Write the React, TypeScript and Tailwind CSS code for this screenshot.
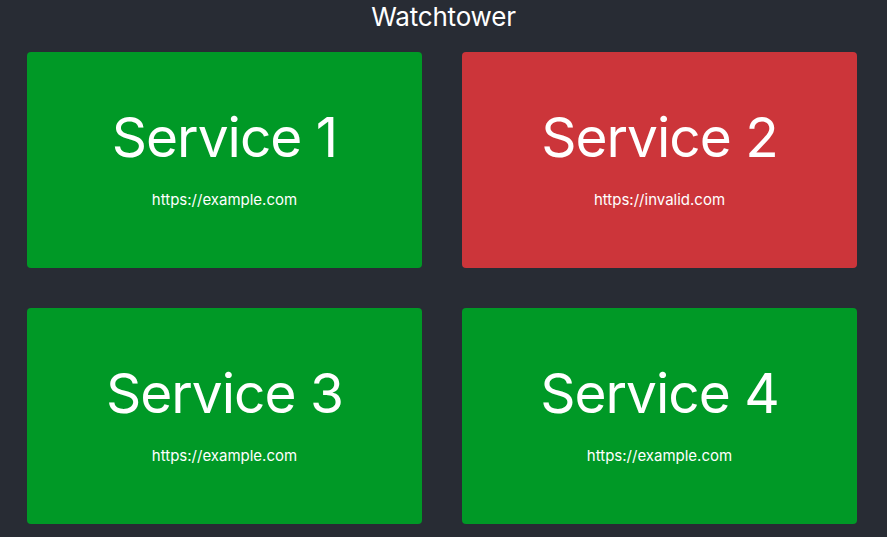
const services = [
  { name: 'Service 1', url: 'https://example.com', up: true },
  { name: 'Service 2', url: 'https://invalid.com', up: false },
  { name: 'Service 3', url: 'https://example.com', up: true },
  { name: 'Service 4', url: 'https://example.com', up: true },
]

export default function App() {
  return (
    <div className="min-h-screen bg-[#282c34] text-white font-['Inter',sans-serif]">
      <h1 className="h-[52px] pt-[1px] text-center text-[26px] leading-[32px] tracking-[-0.2px]">Watchtower</h1>
      <div className="grid grid-cols-[395px_395px] gap-x-[40px] gap-y-[40px] pl-[27px]">
        {services.map((s) => (
          <div
            key={s.name}
            className={`h-[216px] rounded flex flex-col items-center pt-[53px] ${
              s.up ? 'bg-[#009926]' : 'bg-[#cc353a]'
            }`}
          >
            <div className="text-[55px] leading-[64px] tracking-[-1px]">{s.name}</div>
            <div className="text-[15px] leading-[20px] mt-[21px]">{s.url}</div>
          </div>
        ))}
      </div>
    </div>
  )
}
